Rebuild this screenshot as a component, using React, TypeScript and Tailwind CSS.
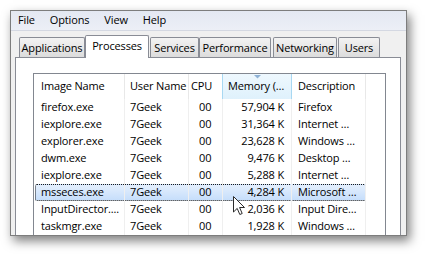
import React from "react";

const rows = [
  { name: "firefox.exe", user: "7Geek", cpu: "00", mem: "57,904 K", desc: "Firefox" },
  { name: "iexplore.exe", user: "7Geek", cpu: "00", mem: "31,364 K", desc: "Internet …" },
  { name: "explorer.exe", user: "7Geek", cpu: "00", mem: "23,628 K", desc: "Windows …" },
  { name: "dwm.exe", user: "7Geek", cpu: "00", mem: "9,476 K", desc: "Desktop …" },
  { name: "iexplore.exe", user: "7Geek", cpu: "00", mem: "5,288 K", desc: "Internet …" },
  { name: "msseces.exe", user: "7Geek", cpu: "00", mem: "4,284 K", desc: "Microsoft …", selected: true },
  { name: "InputDirector....", user: "7Geek", cpu: "00", mem: "2,036 K", desc: "Input Dire…" },
  { name: "taskmgr.exe", user: "7Geek", cpu: "00", mem: "1,928 K", desc: "Windows …" },
];

const tabs = [
  { label: "Applications", cls: "ml-[8px] w-[66px]" },
  { label: "Processes", cls: "w-[64px]", active: true },
  { label: "Services", cls: "ml-[1px] w-[49px]" },
  { label: "Performance", cls: "w-[72px]" },
  { label: "Networking", cls: "ml-[2px] w-[64px]" },
  { label: "Users", cls: "ml-[1px] w-[42px]" },
];

const cols = "grid grid-cols-[91px_64px_34px_69px_74px_1fr]";

export default function App() {
  return (
    <div className="relative h-[254px] w-[426px] overflow-hidden bg-white font-['Open_Sans','Noto_Sans',sans-serif] text-[11px] tracking-[-0.15px] text-black">
      {/* window */}
      <div className="ml-[10px] mt-[10px] flex h-[226px] w-[397px] flex-col overflow-hidden border border-[#7d7d7d] bg-[#f0f0f0] shadow-[3px_5px_10px_rgba(0,0,0,0.5)]">
        {/* menu */}
        <div className="flex h-[20px] shrink-0 items-center gap-[15px] border-b border-[#d4d8e2] bg-gradient-to-b from-[#e4e8f2] to-[#eceff6] pl-[7px]">
          <span>File</span>
          <span>Options</span>
          <span>View</span>
          <span>Help</span>
        </div>

        {/* tabs */}
        <div className="mt-[4px] flex h-[22px] shrink-0 items-end">
          {tabs.map((t) =>
            t.active ? (
              <div
                key={t.label}
                className={`relative z-10 -mb-[1px] flex h-[23px] items-start justify-center rounded-t-[2px] border border-b-0 border-[#898c95] bg-white pt-[2px] ${t.cls}`}
              >
                {t.label}
              </div>
            ) : (
              <div
                key={t.label}
                className={`flex h-[20px] items-center justify-center rounded-t-[2px] border border-b-0 border-[#898c95] bg-gradient-to-b from-[#f3f3f3] to-[#dcdcdc] pt-[1px] ${t.cls}`}
              >
                {t.label}
              </div>
            )
          )}
        </div>

        {/* panel */}
        <div className="ml-[4px] mr-[5px] flex-1 border border-[#898c95] bg-white">
          <div className="ml-[17px] mr-[14px] mt-[15px] border border-[#828790] bg-white">
            {/* header */}
            <div className={`${cols} h-[25px]`}>
              <div className="flex items-center border-r border-[#e8e8e8] pl-[7px]">Image Name</div>
              <div className="flex items-center border-r border-[#e8e8e8] pl-[5px]">User Name</div>
              <div className="flex items-center border-r border-[#e8e8e8] pl-[2px]">CPU</div>
              <div className="relative -ml-[1px] flex items-center border-x border-[#a8d8f2] bg-gradient-to-b from-[#eef8fe] to-[#dff1fc] pl-[5px]">
                Memory (…
                <svg className="absolute left-[31px] top-[1px]" width="8" height="4" viewBox="0 0 8 4">
                  <path d="M0 0 H7 L3.5 3.5 Z" fill="#8fb2d6" />
                </svg>
              </div>
              <div className="flex items-center border-r border-[#e8e8e8] pl-[6px]">Description</div>
              <div />
            </div>

            {/* rows */}
            {rows.map((r, i) => (
              <div key={i} className={`${cols} relative h-[17px]`}>
                {r.selected && (
                  <div className="absolute left-[1px] top-0 h-[17px] w-[331px] rounded-[2px] border border-dotted border-[#1b1b1b] bg-gradient-to-b from-[#e4effd] to-[#c6defb]" />
                )}
                <div className="relative flex items-center border-r border-[#efefef] pl-[7px]">{r.name}</div>
                <div className="relative flex items-center border-r border-[#efefef] pl-[5px]">{r.user}</div>
                <div className="relative flex items-center border-r border-[#efefef] pl-[10px]">{r.cpu}</div>
                <div className="relative flex items-center justify-end border-r border-[#efefef] pr-[7px]">{r.mem}</div>
                <div className="relative flex items-center border-r border-[#efefef] pl-[6px]">{r.desc}</div>
                <div />
              </div>
            ))}
          </div>
        </div>
      </div>

      {/* mouse pointer */}
      <svg className="absolute left-[233px] top-[196px]" width="13" height="20" viewBox="0 0 13 20">
        <path
          d="M0.5 0.5 V16 L4.2 12.4 L6.8 18.5 L9.2 17.5 L6.6 11.5 H11.5 Z"
          fill="#ffffff"
          stroke="#2a2a2a"
          strokeWidth="1"
          strokeLinejoin="round"
        />
      </svg>
    </div>
  );
}
